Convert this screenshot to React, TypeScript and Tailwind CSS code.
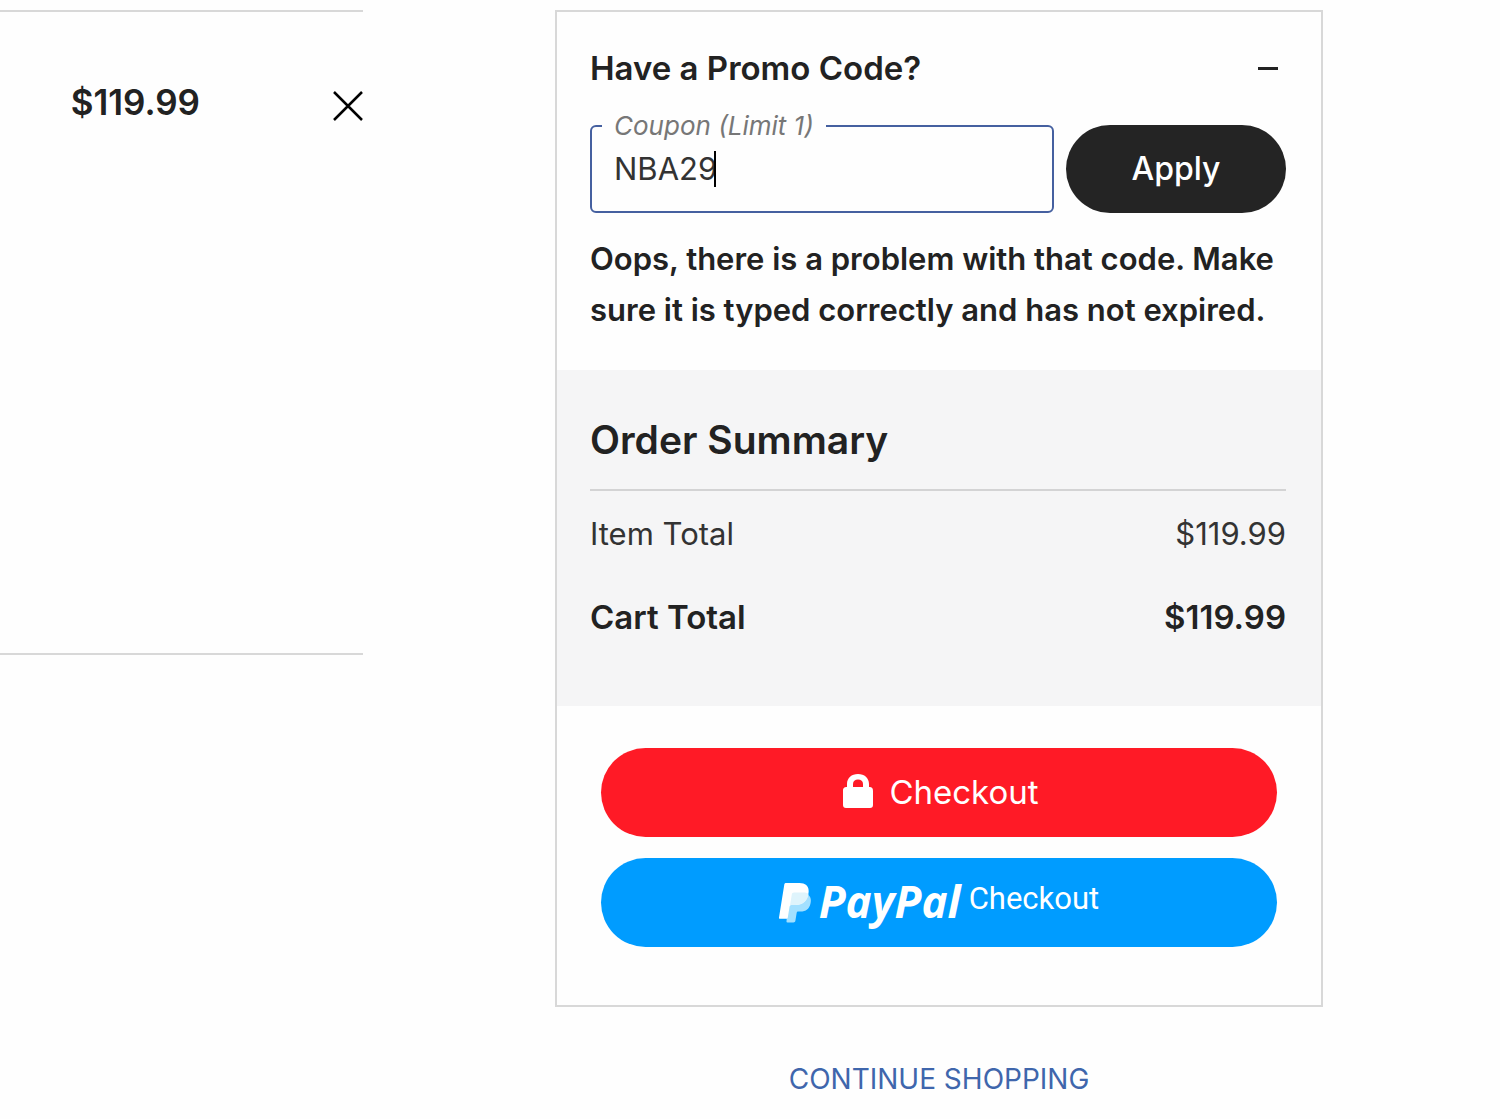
import { useState } from "react";

function PayPalMark() {
  return (
    <svg viewBox="0 0 32 42" className="h-[42px] w-8" aria-hidden="true">
      <path
        d="M10 12l19.500 1c2.400 2 2.800 5 2 8.500-1.200 5.500-4.500 8-10 8h-2.300c-.8 0-1.300.5-1.500 1.300l-1.300 8c-.2 1-.9 1.700-2 1.700H8.500c-.8 0-1.200-.5-1-1.300z"
        fill="#a3e0ff"
      />
      <path
        d="M7 1h13.500c6.500 0 10 3.500 9 10-1.200 8-6 12-13 12h-4.200c-.9 0-1.500.6-1.700 1.500L8.800 35.500c-.2.900-.7 1.300-1.500 1.300H1c-.8 0-1.200-.5-1-1.300L5.300 2.500C5.500 1.500 6 1 7 1z"
        fill="#ffffff"
      />
      <path
        d="M29.500 12c-1.300 7.500-6 11-13 11h-4.200c-.6 0-1 .2-1.300.6l1.800-11.200c.2-1.200.9-1.900 2.200-1.900h9.500c2 0 3.700.4 5 1.500z"
        fill="#dff4fc"
      />
    </svg>
  );
}

function CartItem() {
  return (
    <section aria-label="Cart item" className="mt-[10px] h-[645px] border-y-2 border-[#d8d8d8]">
      <div className="flex items-center justify-end pt-[62px]">
        <span className="pt-1 text-[35px] leading-[48px] font-semibold">$119.99</span>
        <button type="button" aria-label="Remove item" className="ml-[131px] mt-3 text-black">
          <svg viewBox="0 0 32 32" className="size-8" fill="none" stroke="currentColor" strokeWidth="2.500" aria-hidden="true">
            <path d="M3 2l28 28M31 2L3 30" />
          </svg>
        </button>
      </div>
    </section>
  );
}

function PromoCode() {
  const [open, setOpen] = useState(true);
  const [code, setCode] = useState("NBA29");
  return (
    <section className="pt-[31px] pr-[35px] pb-[35px] pl-[33px]">
      <button
        type="button"
        aria-expanded={open}
        onClick={() => setOpen(!open)}
        className="flex w-full items-center justify-between pr-2 text-left text-[33px] leading-[50px] font-semibold"
      >
        <span>Have a Promo Code?</span>
        <span className={open ? "h-[3px] w-5 bg-[#222]" : "h-5 w-[3px] bg-[#222]"} />
      </button>
      {open && (
        <>
          <form className="mt-4 flex items-end gap-3" onSubmit={(e) => e.preventDefault()}>
            <fieldset className="h-[104px] min-w-0 flex-1 rounded-[6px] border-2 border-[#4560a0] px-[10px]">
              <legend className="px-3 text-[26px] leading-[34px] text-[#777] italic">
                <label htmlFor="coupon">Coupon (Limit 1)</label>
              </legend>
              <div className="relative px-3 pt-1.5">
                <input
                  id="coupon"
                  value={code}
                  onChange={(e) => setCode(e.target.value)}
                  className="block w-full text-[31px] leading-[40px] text-[#333] outline-none"
                />
                <span className="absolute top-2 left-[112px] h-9 w-0.5 bg-black" />
              </div>
            </fieldset>
            <button type="submit" className="h-[88px] w-[220px] rounded-full bg-[#242424] text-[32px] font-medium text-white">
              Apply
            </button>
          </form>
          <p role="alert" className="mt-5 text-[31px] leading-[51px] font-semibold">
            Oops, there is a problem with that code. Make sure it is typed correctly and has not expired.
          </p>
        </>
      )}
    </section>
  );
}

function OrderSummary() {
  return (
    <section className="bg-[#f5f5f6] pt-[41px] pr-[35px] pb-[63px] pl-[33px]">
      <h2 className="border-b-2 border-[#d3d3d4] pb-5 text-[39px] leading-[58px] font-semibold">Order Summary</h2>
      <dl>
        <div className="mt-[19px] flex justify-between text-[31px] leading-12 text-[#333]">
          <dt>Item Total</dt>
          <dd>$119.99</dd>
        </div>
        <div className="mt-[33px] flex justify-between text-[33px] leading-[52px] font-semibold">
          <dt>Cart Total</dt>
          <dd>$119.99</dd>
        </div>
      </dl>
    </section>
  );
}

export default function App() {
  return (
    <div className="min-h-screen bg-[#fefefe] font-['Inter',sans-serif] text-[#222]">
      <main className="grid grid-cols-[363fr_768fr] items-start gap-48 pr-[177px]">
        <CartItem />
        <aside className="mt-[10px]">
          <div className="border-2 border-[#d8d8d8]">
            <PromoCode />
            <OrderSummary />
            <div className="flex flex-col gap-[21px] px-11 pt-[42px] pb-[58px]">
              <button type="button" className="flex h-[89px] items-center justify-center gap-4 rounded-full bg-[#ff1a26] pl-1 text-[33px] text-white">
                <svg viewBox="0 0 30 34" className="mb-1 h-[34px] w-[30px]" aria-hidden="true">
                  <path d="M4 13v-3C4 4 8.500 0 15 0s11 4 11 10v3c3 0 4 1 4 4v14c0 2-1 3-3 3H3c-2 0-3-1-3-3V17c0-3 1-4 4-4zm6 0h10v-3c0-3-2-4.500-5-4.500S10 7 10 10z" fill="#fff" />
                </svg>
                Checkout
              </button>
              <button type="button" className="flex h-[89px] items-center justify-center rounded-full bg-[#009cff] text-white">
                <PayPalMark />
                <span className="mb-1 ml-2 font-['Open_Sans',sans-serif] text-[44px] leading-[44px] font-bold italic">PayPal</span>
                <span className="mb-2 ml-2 font-['Roboto',sans-serif] text-[31px] leading-9">Checkout</span>
              </button>
            </div>
          </div>
          <p className="mt-[50px] text-center text-[28px] leading-[44px]">
            <a href="#shop" className="text-[#3f66ac]">CONTINUE SHOPPING</a>
          </p>
        </aside>
      </main>
    </div>
  );
}
